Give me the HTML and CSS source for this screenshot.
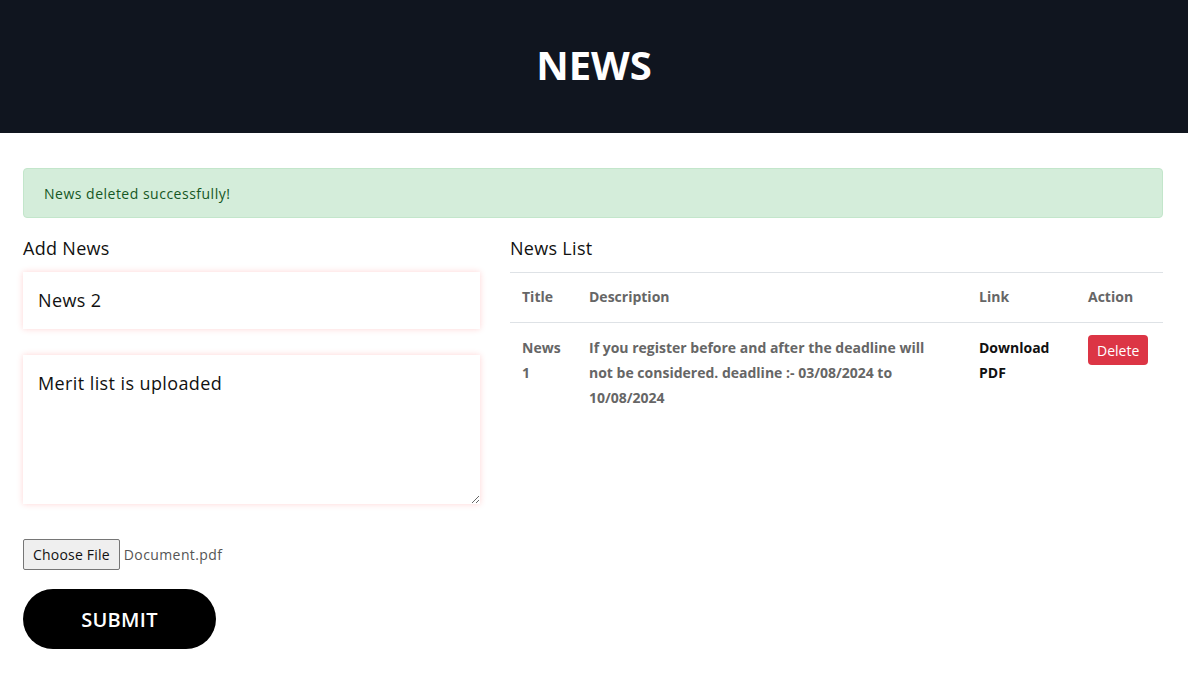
FILE: index.html
```html
<!DOCTYPE html>
<html lang="en">
<head>
<meta charset="utf-8">
<title>News</title>
<link rel="stylesheet" href="styles.css">
</head>
<body>
<header class="top">
  <h1 class="top-title">NEWS</h1>
</header>
<main class="page">
  <div class="alert">News deleted successfully!</div>
  <div class="row">
    <section class="col-left">
      <h2 class="section-title">Add News</h2>
      <input class="field" type="text" value="News 2">
      <textarea class="field area">Merit list is uploaded</textarea>
      <div class="file-row">
        <span class="file-btn">Choose File</span>
        <span class="file-name">Document.pdf</span>
      </div>
      <button class="submit" type="button">SUBMIT</button>
    </section>
    <section class="col-right">
      <h2 class="section-title">News List</h2>
      <table class="news-table">
        <colgroup>
          <col class="c-title">
          <col class="c-desc">
          <col class="c-link">
          <col class="c-action">
        </colgroup>
        <thead>
          <tr>
            <th>Title</th>
            <th>Description</th>
            <th>Link</th>
            <th>Action</th>
          </tr>
        </thead>
        <tbody>
          <tr>
            <td>News 1</td>
            <td class="desc">If you register before and after the deadline will not be considered. deadline :- 03/08/2024 to 10/08/2024</td>
            <td><a class="dl" href="#">Download PDF</a></td>
            <td><button class="del" type="button">Delete</button></td>
          </tr>
        </tbody>
      </table>
    </section>
  </div>
</main>
</body>
</html>
```
FILE: styles.css
```css
* { box-sizing: border-box; }
body {
  margin: 0;
  font-family: "Open Sans", "Noto Sans", sans-serif;
  color: #111;
  background: #fff;
}
.top {
  background: #10151f;
  height: 133px;
  display: flex;
  align-items: center;
  justify-content: center;
}
.top-title {
  margin: 0;
  color: #fff;
  font-size: 40px;
  font-weight: 700;
  line-height: 1;
  padding-bottom: 4px;
}
.page {
  padding: 35px 25px 0 23px;
}
.alert {
  height: 50px;
  background: #d4edda;
  border: 1px solid #c3e6cb;
  border-radius: 4px;
  color: #155724;
  font-size: 14px;
  letter-spacing: 0.5px;
  padding: 0 20px;
  display: flex;
  align-items: center;
  margin-bottom: 16px;
}
.row {
  display: flex;
  gap: 30px;
}
.col-left {
  width: 457px;
  flex: none;
}
.col-right {
  flex: 1;
}
.section-title {
  margin: 0 0 11px;
  padding-top: 1px;
  font-size: 18px;
  font-weight: 400;
  line-height: 26px;
  letter-spacing: 0.3px;
  color: #111;
}
.field {
  display: block;
  width: 100%;
  border: none;
  outline: none;
  font-family: inherit;
  font-size: 18px;
  line-height: 27px;
  letter-spacing: 0.4px;
  padding: 15px;
  color: #111;
  background: #fff;
  box-shadow: 0 0 6px rgba(255, 60, 60, 0.22);
  margin: 0 0 26px;
}
.area {
  height: 149px;
  resize: vertical;
  margin-bottom: 35px;
}
.file-row {
  display: flex;
  align-items: center;
  height: 31px;
  gap: 4px;
  margin-bottom: 19px;
}
.file-btn {
  display: inline-flex;
  align-items: center;
  height: 31px;
  padding: 0 9px;
  background: #efefef;
  border: 1px solid #767676;
  border-radius: 2px;
  font-size: 14px;
  letter-spacing: 0.2px;
  color: #111;
}
.file-name {
  font-size: 14px;
  letter-spacing: 0.4px;
  color: #555;
}
.submit {
  width: 193px;
  height: 60px;
  border: none;
  border-radius: 30px;
  background: #000;
  color: #fff;
  font-family: inherit;
  font-size: 20px;
  font-weight: 600;
  letter-spacing: 0.3px;
  cursor: pointer;
}
.news-table {
  width: 100%;
  border-collapse: collapse;
  table-layout: fixed;
  font-size: 14px;
  line-height: 25px;
}
.c-title { width: 67px; }
.c-desc { width: 390px; }
.c-link { width: 109px; }
.c-action { width: auto; }
.news-table th,
.news-table td {
  text-align: left;
  vertical-align: top;
  padding: 12px;
  font-weight: 700;
  color: #666;
  border-top: 1px solid #dee2e6;
}
.news-table th {
  border-bottom: 1px solid #dee2e6;
  padding-top: 11px;
  padding-bottom: 13px;
}
.news-table tbody td {
  border-top: none;
}
.news-table .desc {
  padding-right: 30px;
}
.dl {
  color: #111;
  text-decoration: none;
}
.del {
  display: block;
  height: 30px;
  padding: 0 9px;
  border: none;
  border-radius: 4px;
  background: #dc3545;
  color: #fff;
  font-family: inherit;
  font-size: 14px;
  font-weight: 400;
}
```
